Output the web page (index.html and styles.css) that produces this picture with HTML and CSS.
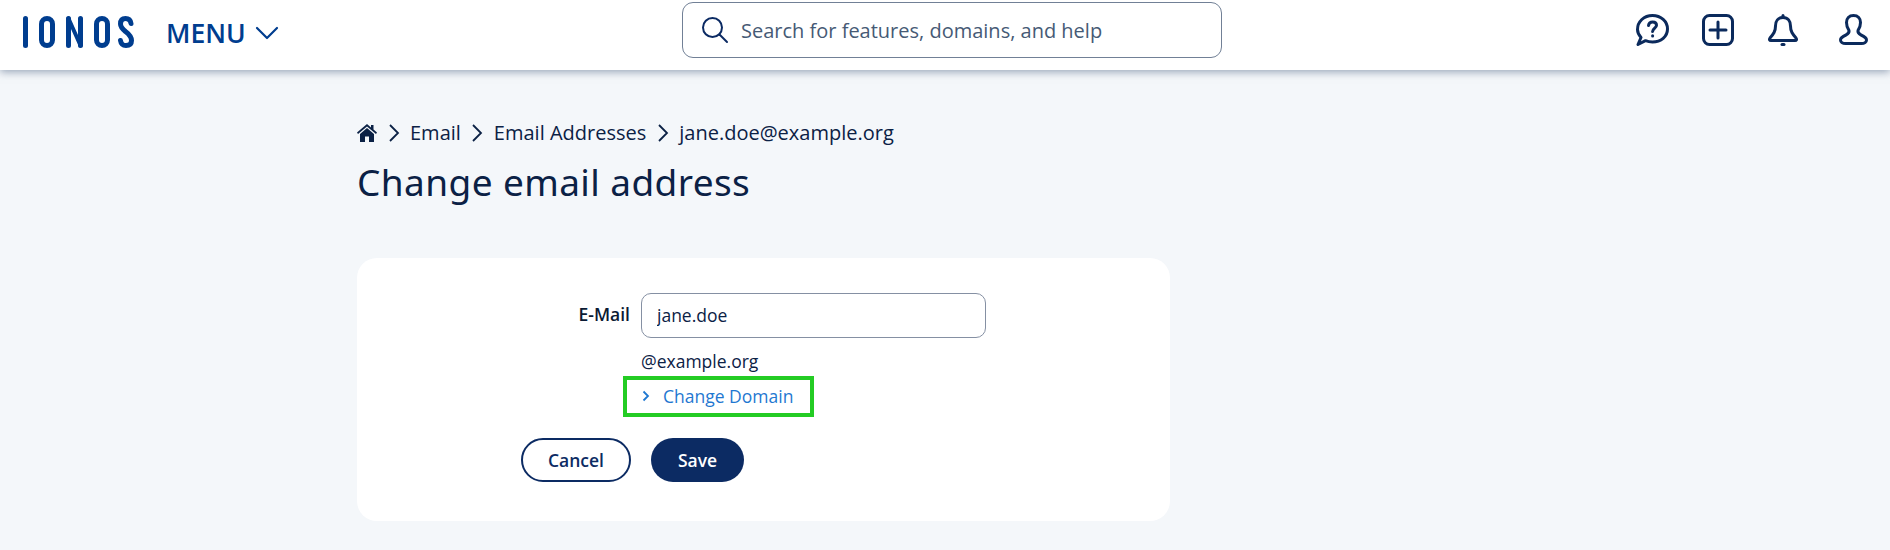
FILE: index.html
```html
<!DOCTYPE html>
<html lang="en">
<head>
<meta charset="utf-8">
<title>Change email address</title>
<link rel="stylesheet" href="styles.css">
</head>
<body>
<header class="topbar">
  <div class="brand">
    <svg class="logo" width="112" height="32" viewBox="0 0 112 32" fill="none" stroke="#003d8f" stroke-width="5" stroke-linecap="round" stroke-linejoin="round" role="img" aria-label="IONOS">
      <path d="M2.500 2.500V29.500"/>
      <rect x="18.500" y="2.500" width="11" height="27" rx="5.500"/>
      <path d="M45.500 29.500V2.500M57.500 29.500V2.500"/>
      <path d="M45.500 2.500L57.500 29.500" stroke-width="4"/>
      <rect x="73.500" y="2.500" width="11" height="27" rx="5.500"/>
      <path d="M108 7.500C107.500 4 105.500 2.500 102.500 2.500C99 2.500 97.500 4.500 97.500 8C97.500 11 99.500 13 102.500 15.500C106.500 18.500 108.500 21 108.500 24.500C108.500 28 106.500 29.500 103 29.500C99.500 29.500 98 28 97.500 24.500"/>
    </svg>
    <button class="menu">MENU
      <svg width="24" height="14" viewBox="0 0 24 14" fill="none" stroke="#003d8f" stroke-width="2.200" stroke-linecap="round" stroke-linejoin="round"><path d="M2 2L12 12L22 2"/></svg>
    </button>
  </div>
  <div class="search">
    <svg width="28" height="28" viewBox="0 0 28 28" fill="none" stroke="#0b2a63" stroke-width="2" stroke-linecap="round"><circle cx="11.500" cy="11.500" r="9.500"/><path d="M18.500 18.500L26 26"/></svg>
    <span>Search for features, domains, and help</span>
  </div>
  <nav class="tools">
    <svg class="tool" width="33" height="32" viewBox="0 0 33 32" fill="none" stroke="#0b2a5c" stroke-width="3" stroke-linejoin="round" stroke-linecap="round"><path d="M2 30.500L5 23.500C2.800 21 1.500 19 1.500 15.500C1.500 7.500 8 1.500 16.500 1.500C25 1.500 31.500 7.500 31.500 15C31.500 22.500 25 28 16.500 28C13.500 28 11.500 27.500 9.500 26.700Z"/><path d="M12.500 11.500C12.800 9.300 14.500 8 16.700 8C19 8 20.500 9.300 20.500 11.200C20.500 14 16.800 14.200 16.600 17.500"/><path d="M16.600 21.800V22"/></svg>
    <svg class="tool" width="32" height="32" viewBox="0 0 32 32" fill="none" stroke="#0b2a5c" stroke-width="3" stroke-linecap="round"><rect x="1.500" y="1.500" width="29" height="29" rx="6"/><path d="M16 8V24M8 16H24"/></svg>
    <svg class="tool bell" width="30" height="32" viewBox="0 0 30 32" fill="none" stroke="#0b2a5c" stroke-width="3" stroke-linejoin="round" stroke-linecap="round"><path d="M15 3.500C10 3.500 7.500 7 7.500 12C7.500 17.500 5.500 20 2 24C1 25.500 1.500 26.500 3 26.500H27C28.500 26.500 29 25.500 28 24C24.500 20 22.500 17.500 22.500 12C22.500 7 20 3.500 15 3.500Z"/><path d="M15 1.500V3"/><path d="M14 30.500H16"/></svg>
    <svg class="tool last" width="29" height="31" viewBox="0 0 29 31" fill="none" stroke="#0b2a5c" stroke-width="3" stroke-linejoin="round"><path d="M14.500 1.500C10 1.500 7.500 4.500 7.500 8.500C7.500 12 8.500 14.500 10 16.500C10.500 18.500 9.500 19.500 7 21C3.500 22.500 1.500 24 1.500 26C1.500 28 3.500 29.500 6.500 29.500H22.500C25.500 29.500 27.500 28 27.500 26C27.500 24 25.500 22.500 22 21C19.500 19.500 18.500 18.500 19 16.500C20.500 14.500 21.500 12 21.500 8.500C21.500 4.500 19 1.500 14.500 1.500Z"/></svg>
  </nav>
</header>
<main class="content">
  <ol class="crumbs">
    <li><svg width="20" height="18" viewBox="0 0 20 18" fill="#0b2145"><path d="M10 0L0 8.500L1 10L10 2.500L19 10L20 8.500L16.500 5.500V1H14V3.500Z"/><path d="M10 4L3 10V18H8V12.500H12V18H17V10Z"/></svg></li>
    <li class="sep"><svg width="12" height="20" viewBox="0 0 12 20" fill="none" stroke="#0b2145" stroke-width="1.800"><path d="M2 2L10 10L2 18"/></svg></li>
    <li>Email</li>
    <li class="sep"><svg width="12" height="20" viewBox="0 0 12 20" fill="none" stroke="#0b2145" stroke-width="1.800"><path d="M2 2L10 10L2 18"/></svg></li>
    <li>Email Addresses</li>
    <li class="sep"><svg width="12" height="20" viewBox="0 0 12 20" fill="none" stroke="#0b2145" stroke-width="1.800"><path d="M2 2L10 10L2 18"/></svg></li>
    <li>jane.doe@example.org</li>
  </ol>
  <h1 class="title">Change email address</h1>
  <section class="card">
    <div class="field">
      <label class="label" for="mail">E-Mail</label>
      <div class="control">
        <input class="input" id="mail" type="text" value="jane.doe">
        <div class="domain">@example.org</div>
        <a class="change" href="#"><svg width="8" height="12" viewBox="0 0 8 12" fill="none" stroke="#1f78d1" stroke-width="1.800"><path d="M1.500 1.500L6 6L1.500 10.500"/></svg>Change Domain</a>
      </div>
    </div>
    <div class="actions">
      <button class="btn ghost">Cancel</button>
      <button class="btn solid">Save</button>
    </div>
  </section>
</main>
</body>
</html>
```

FILE: styles.css
```css
* { box-sizing: border-box; }
html, body { margin: 0; height: 100%; }
body {
  background: #f4f7fa;
  color: #0b2145;
  font-family: "Open Sans", "Liberation Sans", sans-serif;
  overflow: hidden;
}
.topbar {
  height: 70px;
  background: #fff;
  box-shadow: 0 2px 8px rgba(90, 110, 140, .6);
  display: grid;
  grid-template-columns: 682px 540px 1fr;
  align-items: start;
}
.brand { display: flex; align-items: center; padding: 15px 0 0 23px; }
.logo { display: block; }
.menu {
  margin-left: 31px;
  padding: 2px 0 0;
  border: 0;
  background: none;
  color: #003d8f;
  font: 600 26.500px/32px "Open Sans", sans-serif;
  display: flex;
  align-items: center;
  gap: 9px;
}
.search {
  margin-top: 2px;
  height: 56px;
  border: 1px solid #718096;
  border-radius: 11px;
  display: flex;
  align-items: center;
  padding-left: 18px;
  gap: 12px;
  font-size: 20px;
  color: #465a75;
}
.tools {
  display: flex;
  justify-content: flex-end;
  align-items: flex-start;
  gap: 33px;
  padding: 14px 22px 0 0;
}
.tool.bell { margin-left: 1px; }
.tool.last { margin-left: 8px; }
.content { padding: 49px 0 0 357px; width: 1170px; }
.crumbs {
  list-style: none;
  margin: 0;
  padding: 0;
  display: flex;
  align-items: center;
  gap: 9px;
  font-size: 20px;
  line-height: 27px;
}
.crumbs li { display: flex; align-items: center; }
.crumbs li.sep { margin: 0 1.500px; }
.title {
  margin: 11px 0 0;
  font-family: "Noto Sans", sans-serif;
  font-weight: 400;
  font-size: 37px;
  line-height: 50px;
  letter-spacing: .4px;
  color: #0b2145;
}
.card {
  margin-top: 51px;
  height: 263px;
  background: #fff;
  border-radius: 20px;
  padding-top: 35px;
}
.field { display: flex; }
.label {
  width: 273px;
  margin-right: 11px;
  text-align: right;
  font-weight: 600;
  font-size: 17.500px;
  line-height: 43px;
  color: #0b1a33;
}
.control { display: flex; flex-direction: column; align-items: flex-start; }
.input {
  width: 345px;
  height: 45px;
  border: 1px solid #8590a3;
  border-radius: 10px;
  padding: 0 15px 2px;
  font: 400 17.500px "Open Sans", sans-serif;
  color: #0b2145;
  background: #fff;
}
.domain { margin-top: 10px; font-size: 17.500px; line-height: 26px; }
.change {
  margin: 2px 0 0 -18px;
  width: 191px;
  height: 41px;
  border: 4px solid #24cc24;
  display: flex;
  align-items: center;
  padding: 0 0 2px 15px;
  gap: 13px;
  color: #1f78d1;
  text-decoration: none;
  font-size: 17.500px;
}
.actions { display: flex; gap: 20px; margin: 21px 0 0 164px; }
.btn {
  height: 44px;
  border-radius: 22px;
  font: 600 17.500px "Open Sans", sans-serif;
  padding: 0;
}
.ghost { width: 110px; background: #fff; border: 2px solid #0c2b63; color: #0c2b63; }
.solid { width: 93px; background: #0c2b63; border: 0; color: #fff; }
```
